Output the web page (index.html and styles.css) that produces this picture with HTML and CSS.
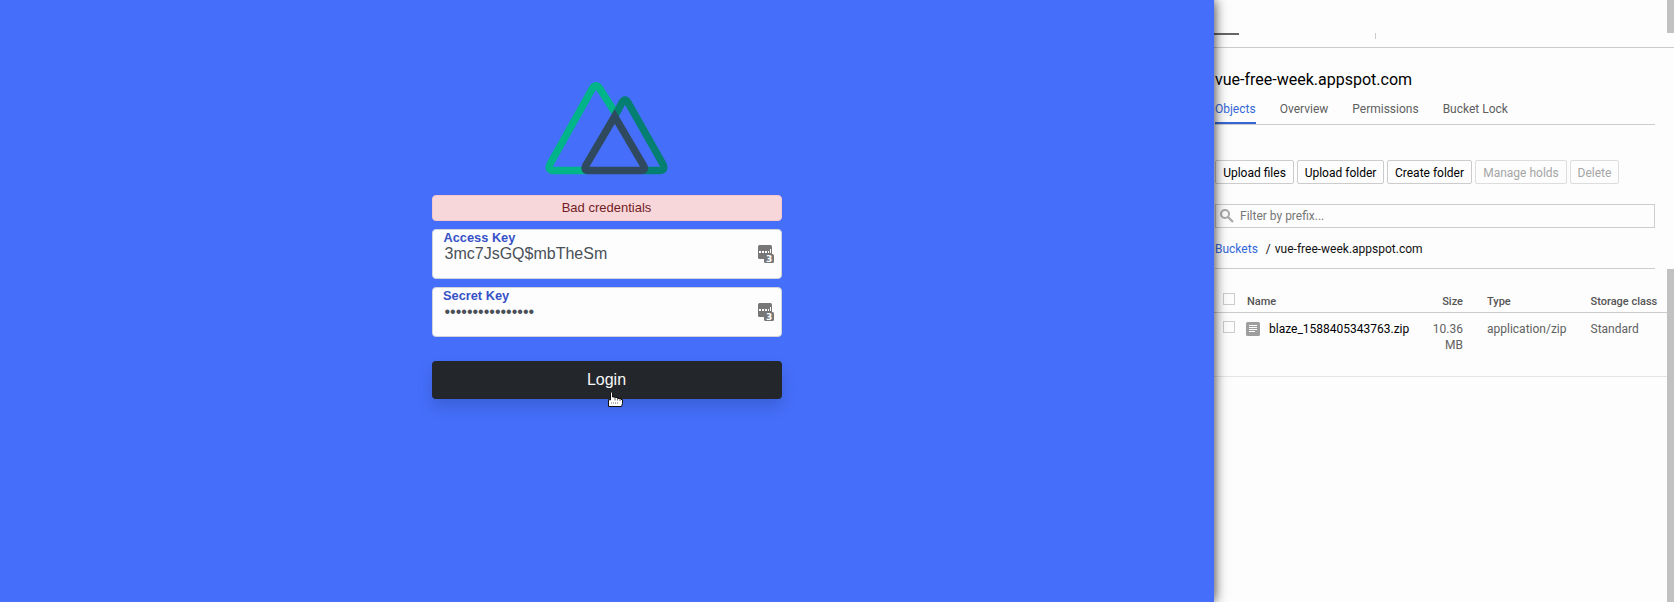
FILE: index.html
```html
<!DOCTYPE html>
<html lang="en">
<head>
<meta charset="utf-8">
<title>Login</title>
<link rel="stylesheet" href="styles.css">
</head>
<body>
<div class="screen">
  <main class="login">
    <form class="login-form">
      <svg class="logo" width="124" height="94" viewBox="0 0 124 94" fill="none" stroke-width="7.400" stroke-linejoin="round">
        <path d="M71 33 54.200 6.800Q51 2.500 47.800 6.800L5 83.300Q2.500 89.500 8.500 89.500H44" stroke="#00b48a"/>
        <path d="M70.500 34 77 21.500Q80 16.500 83 21.500L118 83.300Q120.800 89.500 114.500 89.500H96" stroke="#047f72"/>
        <path d="M69.700 35.500 40.800 84.500Q38.500 89.500 43 89.500H96Q101 89.500 98.500 84.500Z" stroke="#2f495e" stroke-linejoin="miter"/>
      </svg>
      <div class="alert">Bad credentials</div>
      <div class="field">
        <div class="field-body"><label>Access Key</label><span class="value">3mc7JsGQ$mbTheSm</span></div>
        <svg class="keys" width="16" height="18" viewBox="0 0 16 18"><rect width="14" height="14" rx="1.500" fill="#777"/><path d="M1 6h2v2H1zm3 0h2v2H4zm3 0h2v2H7zm3 0h1v2h-1zm2-2h1v4h-1z" fill="#fff"/><rect x="6" y="9" width="10" height="9" rx="1.500" fill="#777"/><text class="key-count" x="8" y="16.500">3</text></svg>
      </div>
      <div class="field">
        <div class="field-body secret"><label>Secret Key</label><span class="value">••••••••••••••••</span></div>
        <svg class="keys" width="16" height="18" viewBox="0 0 16 18"><rect width="14" height="14" rx="1.500" fill="#777"/><path d="M1 6h2v2H1zm3 0h2v2H4zm3 0h2v2H7zm3 0h1v2h-1zm2-2h1v4h-1z" fill="#fff"/><rect x="6" y="9" width="10" height="9" rx="1.500" fill="#777"/><text class="key-count" x="8" y="16.500">3</text></svg>
      </div>
      <div class="submit"><span>Login</span>
        <svg class="pointer" width="17" height="17" viewBox="0 0 17 17"><path d="M3.500 9V2Q3.500 1 4.500 1T5.500 2V6H8V6.500H11V7.500H14V8.500H15.500V12.500L14.500 15.500H1.500V8.500Z" fill="#fff" stroke="#111"/><path d="M8 6v3.500M10.500 7v2.500M13 8v2M4 12h1m1 0h1m1 0h1m1 0h1" stroke="#444" stroke-width=".8"/></svg>
      </div>
    </form>
  </main>
  <aside class="storage">
    <div class="topbar"><span class="top-tab"></span><span class="divider"></span></div>
    <section class="bucket">
      <h1>vue-free-week.appspot.com</h1>
      <nav class="tabs"><a class="active">Objects</a><a>Overview</a><a>Permissions</a><a>Bucket Lock</a></nav>
      <div class="actions">
        <span class="button b1">Upload files</span><span class="button b2">Upload folder</span><span class="button b3">Create folder</span><span class="button b4 disabled">Manage holds</span><span class="button b5 disabled">Delete</span>
      </div>
      <div class="filter"><svg width="14" height="14" viewBox="0 0 14 14" fill="none" stroke="#a9a9a9"><circle cx="5" cy="5" r="4" stroke-width="2"/><path d="m8 8 5 5" stroke-width="2.300"/></svg><span>Filter by prefix...</span></div>
      <div class="crumbs"><a>Buckets</a><span class="slash">/</span><span>vue-free-week.appspot.com</span></div>
    </section>
    <div class="objects">
      <div class="row head"><i class="check"></i><span>Name</span><span class="size">Size</span><span class="type">Type</span><span class="class">Storage class</span></div>
      <div class="row item"><i class="check"></i><span class="file"><svg width="14" height="14" viewBox="0 0 14 14"><rect width="14" height="14" rx="1.500" fill="#9e9e9e"/><path d="M3 3.500h8M3 5.500h8M3 7.500h8M3 9.500h6" stroke="#fff"/></svg>blaze_1588405343763.zip</span><span class="size">10.36<br>MB</span><span class="type">application/zip</span><span class="class">Standard</span></div>
    </div>
    <i class="scroll scroll-top"></i><i class="scroll scroll-main"></i>
  </aside>
</div>
</body>
</html>
```
FILE: styles.css
```css
* { box-sizing: border-box; }
body { margin: 0; }
.screen { display: flex; width: 1674px; height: 602px; overflow: hidden; }
.login { position: relative; z-index: 1; width: 1214px; background: #456ffb; padding-top: 81px; font-family: "Liberation Sans", Arial, sans-serif; box-shadow: 0 0 12px rgba(0,0,0,.85); }
.login-form { width: 350px; margin: 0 auto; display: flex; flex-direction: column; }
.logo { margin-left: 113px; margin-bottom: 20px; }
.alert { height: 26px; border: 1px solid #f5c6cb; border-radius: 4px; background: #f8d7da; color: #721c24; font-size: 13px; line-height: 24px; text-align: center; margin-bottom: 8px; padding-right: 1px; }
.field { height: 50px; border: 1px solid #ced4da; border-radius: 4px; background: #fdfdfd; margin-bottom: 8px; display: flex; justify-content: space-between; padding: 0 7px 0 11px; }
.field-body { display: flex; flex-direction: column; }
.field label { font-size: 12.8px; line-height: 16px; font-weight: bold; color: #3651c8; margin-left: -.5px; }
.field .secret label { margin-left: -1px; }
.value { font-size: 16px; line-height: 16px; color: #495057; padding-left: .5px; }
.keys { margin-top: 15px; }
.key-count { font: bold 9px "DejaVu Sans", sans-serif; fill: #fff; }
.submit { position: relative; height: 38px; margin-top: 16px; border-radius: 4px; background: #23262a; color: #f8f9fa; text-align: center; padding-right: 1px; font-size: 16px; line-height: 37px; box-shadow: 0 8px 16px rgba(0,0,0,.15); }
.pointer { position: absolute; left: 175px; top: 30px; }
.storage { position: relative; width: 460px; background: #fdfdfd; font-family: Roboto, sans-serif; font-size: 12px; color: #111; }
.topbar { height: 48px; border-bottom: 1px solid #ccc; padding-top: 33px; display: flex; align-items: flex-start; }
.top-tab { width: 25px; height: 2px; background: #666; }
.divider { width: 1px; height: 6px; margin-left: 136px; background: #ccc; }
.bucket { width: 441px; padding-left: 1px; }
h1 { font-size: 16px; line-height: 20px; font-weight: 400; color: #000; margin: 0; padding-top: 22px; }
.tabs { display: flex; gap: 24px; height: 35px; border-bottom: 1px solid #ccc; color: #5f5f5f; }
.tabs a { height: 34px; padding-top: 11px; line-height: 16px; }
.tabs .active { color: #3367d6; border-bottom: 2px solid #3367d6; }
.actions { display: flex; gap: 3px; margin-top: 35px; }
.button { height: 24px; border: 1px solid #ccc; border-radius: 2px; text-align: center; line-height: 24px; color: #000; }
.b1 { width: 79px; } .b2 { width: 87px; } .b3 { width: 85px; } .b4 { width: 92px; } .b5 { width: 49px; }
.disabled { border-color: #ddd; color: #a5a5a5; }
.filter { height: 24px; margin-top: 20px; border: 1px solid #ccc; display: flex; align-items: center; padding-left: 4px; gap: 6px; color: #777; }
.crumbs { height: 41px; border-bottom: 1px solid #ccc; display: flex; line-height: 42px; }
.crumbs a { color: #3367d6; }
.slash { margin: 0 4px 0 8px; }
.objects { width: 453px; }
.row { display: grid; grid-template-columns: 24px 157px 59px 103px 1fr; padding-left: 9px; }
.head { height: 44px; padding-top: 24px; border-bottom: 1px solid #ccc; font-size: 11px; font-weight: 500; line-height: 18px; color: #555; }
.item { height: 64px; padding-top: 8px; border-bottom: 1px solid #e5e5e5; line-height: 16px; color: #616161; }
.check { width: 12px; height: 12px; border: 1px solid #ccc; }
.file { display: flex; gap: 9px; margin-left: -1px; color: #000; white-space: nowrap; }
.file svg { margin-top: 1px; flex: none; }
.size { text-align: right; }
.type { padding-left: 24px; }
.class { padding-left: 24.5px; white-space: nowrap; }
.scroll { position: absolute; right: 0; width: 7px; background: #c1c1c1; }
.scroll-top { top: 0; height: 33px; }
.scroll-main { top: 269px; bottom: 0; }
```
